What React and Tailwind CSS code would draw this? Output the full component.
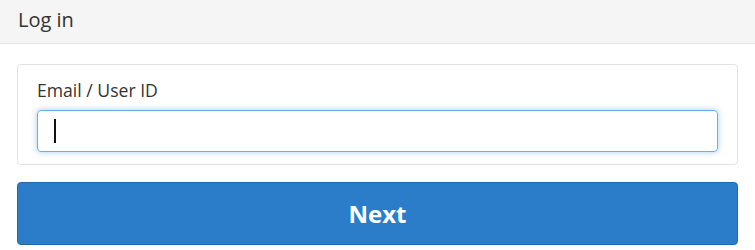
export default function App() {
  return (
    <div className="w-[755px] h-[250px] bg-white overflow-hidden" style={{ fontFamily: '"Open Sans", sans-serif' }}>
      <div className="h-[44px] bg-[#f5f5f5] border-b border-[#e3e3e3] flex items-center px-[18px]">
        <h1 className="text-[20px] text-[#333] leading-none -mt-[4px]">Log in</h1>
      </div>
      <div className="px-[17px] pt-[20px]">
        <div className="border border-[#e3e3e3] rounded-[4px] px-[19px] pt-[13px] pb-[12px] w-[721px]">
          <label className="block text-[17.6px] text-[#333] leading-[24px] mb-[8px]">Email / User ID</label>
          <div className="h-[42px] border border-[#66afe9] rounded-[4px] shadow-[0_0_6px_rgba(102,175,233,0.6)] flex items-center pl-[16px]">
            <div className="w-[2px] h-[24px] bg-[#111]" />
          </div>
        </div>
        <button className="mt-[17px] w-[721px] h-[63px] bg-[#2b7dc9] border border-[#2569ad] rounded-[4px] text-white font-bold text-[24px] flex items-center justify-center">
          Next
        </button>
      </div>
    </div>
  );
}
